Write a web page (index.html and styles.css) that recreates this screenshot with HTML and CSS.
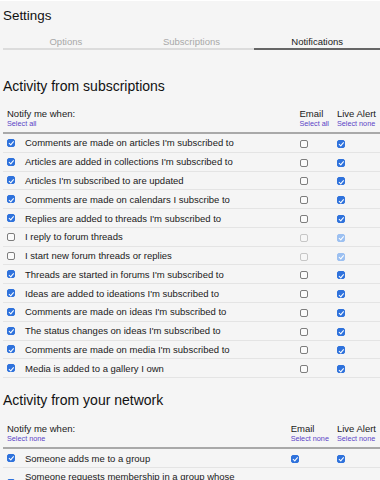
FILE: index.html
```html
<!DOCTYPE html>
<html lang="en">
<head>
<meta charset="utf-8">
<title>Settings</title>
<link rel="stylesheet" href="styles.css">
</head>
<body>
<div class="page">
  <h1 class="title">Settings</h1>
  <nav class="tabs">
    <span class="tab">Options</span>
    <span class="tab">Subscriptions</span>
    <span class="tab active">Notifications</span>
  </nav>

  <section class="group first">
    <h2 class="group-title">Activity from subscriptions</h2>
    <table class="prefs">
      <thead>
        <tr>
          <th class="lbl"><span class="hd">Notify me when:</span><a class="sel">Select all</a></th>
          <th class="col"><span class="hd">Email</span><a class="sel">Select all</a></th>
          <th class="col"><span class="hd">Live Alert</span><a class="sel">Select none</a></th>
        </tr>
      </thead>
      <tbody>
        <tr><td class="lbl"><span class="cb on"></span>Comments are made on articles I'm subscribed to</td><td class="col"><span class="cb"></span></td><td class="col"><span class="cb on"></span></td></tr>
        <tr><td class="lbl"><span class="cb on"></span>Articles are added in collections I'm subscribed to</td><td class="col"><span class="cb"></span></td><td class="col"><span class="cb on"></span></td></tr>
        <tr><td class="lbl"><span class="cb on"></span>Articles I'm subscribed to are updated</td><td class="col"><span class="cb"></span></td><td class="col"><span class="cb on"></span></td></tr>
        <tr><td class="lbl"><span class="cb on"></span>Comments are made on calendars I subscribe to</td><td class="col"><span class="cb"></span></td><td class="col"><span class="cb on"></span></td></tr>
        <tr><td class="lbl"><span class="cb on"></span>Replies are added to threads I'm subscribed to</td><td class="col"><span class="cb"></span></td><td class="col"><span class="cb on"></span></td></tr>
        <tr><td class="lbl"><span class="cb"></span>I reply to forum threads</td><td class="col"><span class="cb dis"></span></td><td class="col"><span class="cb on dis"></span></td></tr>
        <tr><td class="lbl"><span class="cb"></span>I start new forum threads or replies</td><td class="col"><span class="cb dis"></span></td><td class="col"><span class="cb on dis"></span></td></tr>
        <tr><td class="lbl"><span class="cb on"></span>Threads are started in forums I'm subscribed to</td><td class="col"><span class="cb"></span></td><td class="col"><span class="cb on"></span></td></tr>
        <tr><td class="lbl"><span class="cb on"></span>Ideas are added to ideations I'm subscribed to</td><td class="col"><span class="cb"></span></td><td class="col"><span class="cb on"></span></td></tr>
        <tr><td class="lbl"><span class="cb on"></span>Comments are made on ideas I'm subscribed to</td><td class="col"><span class="cb"></span></td><td class="col"><span class="cb on"></span></td></tr>
        <tr><td class="lbl"><span class="cb on"></span>The status changes on ideas I'm subscribed to</td><td class="col"><span class="cb"></span></td><td class="col"><span class="cb on"></span></td></tr>
        <tr><td class="lbl"><span class="cb on"></span>Comments are made on media I'm subscribed to</td><td class="col"><span class="cb"></span></td><td class="col"><span class="cb on"></span></td></tr>
        <tr><td class="lbl"><span class="cb on"></span>Media is added to a gallery I own</td><td class="col"><span class="cb"></span></td><td class="col"><span class="cb on"></span></td></tr>
      </tbody>
    </table>
  </section>

  <section class="group">
    <h2 class="group-title">Activity from your network</h2>
    <table class="prefs">
      <thead>
        <tr>
          <th class="lbl"><span class="hd">Notify me when:</span><a class="sel">Select none</a></th>
          <th class="col"><span class="hd">Email</span><a class="sel">Select none</a></th>
          <th class="col"><span class="hd">Live Alert</span><a class="sel">Select none</a></th>
        </tr>
      </thead>
      <tbody>
        <tr><td class="lbl"><span class="cb on"></span>Someone adds me to a group</td><td class="col"><span class="cb on"></span></td><td class="col"><span class="cb on"></span></td></tr>
        <tr><td class="lbl"><span class="cb on"></span>Someone requests membership in a group whose membership I manage</td><td class="col"><span class="cb on"></span></td><td class="col"><span class="cb on"></span></td></tr>
        <tr><td class="lbl"><span class="cb on"></span>Someone invites me to join a group</td><td class="col"><span class="cb on"></span></td><td class="col"><span class="cb on"></span></td></tr>
      </tbody>
    </table>
  </section>
</div>
</body>
</html>
```

FILE: styles.css
```css
html, body {
  margin: 0;
  padding: 0;
}

body {
  background: #f5f5f5;
  border-top: 1px solid #ffffff;
  font-family: "Liberation Sans", Arial, Helvetica, sans-serif;
  color: #1a1a1a;
  font-size: 9.5px;
}

.page {
  padding-left: 3px;
}

.title {
  margin: 0;
  padding-top: 7px;
  font-size: 13.4px;
  line-height: 16px;
  font-weight: normal;
  color: #111;
}

.tabs {
  display: grid;
  grid-template-columns: repeat(3, 1fr);
  margin-top: 12px;
}

.tab {
  text-align: center;
  font-size: 9.5px;
  line-height: 12px;
  color: #a8a8a8;
  border-bottom: 2px solid #dcdcdc;
}

.tab.active {
  color: #222;
  border-bottom-color: #666;
}

.group-title {
  margin: 0;
  font-size: 14px;
  line-height: 18px;
  font-weight: normal;
  color: #111;
}

.first .group-title {
  margin-top: 27px;
}

.group + .group .group-title {
  margin-top: 13px;
}

.prefs {
  width: 100%;
  border-collapse: collapse;
  margin-top: 13px;
}

.group + .group .prefs {
  margin-top: 14px;
}

.prefs th {
  text-align: left;
  font-weight: normal;
  padding: 0 4px 4px;
  vertical-align: bottom;
  border-bottom: 2px solid #a9a9a9;
}

.prefs .hd {
  display: block;
  font-size: 9.5px;
  line-height: 11px;
  color: #1a1a1a;
}

.prefs .sel {
  display: block;
  font-size: 7.25px;
  line-height: 9px;
  color: #5a44c6;
  white-space: nowrap;
}

.prefs th.col,
.prefs td.col {
  width: 1%;
  white-space: nowrap;
}

.prefs td {
  padding: 2.4px 4px;
  line-height: 13px;
  vertical-align: middle;
  border-bottom: 1px solid #e4e4e4;
}

.prefs td.lbl {
  padding-left: 22px;
  position: relative;
}

.prefs td.lbl .cb {
  position: absolute;
  left: 4px;
  top: 50%;
  margin-top: -4px;
}

.cb {
  display: inline-block;
  vertical-align: middle;
  position: relative;
  box-sizing: border-box;
  width: 8px;
  height: 8px;
  border-radius: 2px;
  border: 1px solid #7d7d7d;
  background: #fbfbfb;
}

.cb.on {
  border-color: #2f72dc;
  background: #2f72dc;
}

.cb.on::after {
  content: "";
  position: absolute;
  left: 2.2px;
  top: 0.4px;
  width: 1.6px;
  height: 3.6px;
  border-right: 1.2px solid #ffffff;
  border-bottom: 1.2px solid #ffffff;
  transform: rotate(40deg);
}

.cb.dis {
  border-color: #c6c6c6;
  background: #f7f7f7;
}

.cb.on.dis {
  border-color: #9cc0f1;
  background: #9cc0f1;
}
```
